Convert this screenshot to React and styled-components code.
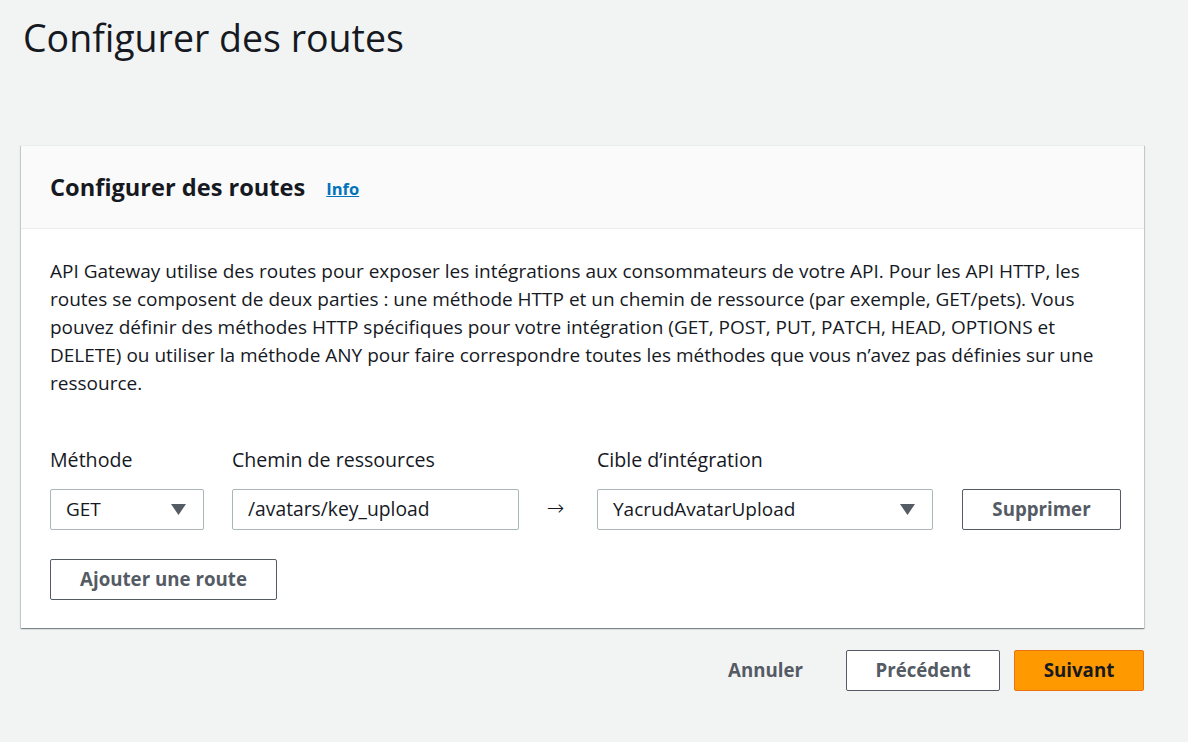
import React from 'react'
import styled, { createGlobalStyle } from 'styled-components'

const Global = createGlobalStyle`
  html, body {
    margin: 0;
    padding: 0;
    background: #f2f3f3;
    font-family: 'Open Sans', 'Noto Sans', sans-serif;
    color: #16191f;
  }
`

const description = [
  'API Gateway utilise des routes pour exposer les intégrations aux consommateurs de votre API. Pour les API HTTP, les',
  'routes se composent de deux parties : une méthode HTTP et un chemin de ressource (par exemple, GET/pets). Vous',
  'pouvez définir des méthodes HTTP spécifiques pour votre intégration (GET, POST, PUT, PATCH, HEAD, OPTIONS et',
  'DELETE) ou utiliser la méthode ANY pour faire correspondre toutes les méthodes que vous n’avez pas définies sur une',
  'ressource.',
].join('\n')

function Caret() {
  return (
    <svg width="15" height="11" viewBox="0 0 15 11">
      <polygon points="0,0 15,0 7.5,11" fill="#545b64" />
    </svg>
  )
}

function App() {
  return (
    <Page>
      <Global />
      <Title>Configurer des routes</Title>

      <Card>
        <CardHeader>
          <CardTitle>Configurer des routes</CardTitle>
          <InfoLink href="#">Info</InfoLink>
        </CardHeader>

        <CardBody>
          <Description>{description}</Description>

          <RouteRow>
            <Field w={154} mr={28}>
              <Label>Méthode</Label>
              <Select>
                <span>GET</span>
                <Caret />
              </Select>
            </Field>
            <Field w={287}>
              <Label>Chemin de ressources</Label>
              <Input>/avatars/key_upload</Input>
            </Field>
            <Arrow>→</Arrow>
            <Field w={336} mr={29}>
              <Label>Cible d’intégration</Label>
              <Select>
                <span>YacrudAvatarUpload</span>
                <Caret />
              </Select>
            </Field>
            <Button w={159}>Supprimer</Button>
          </RouteRow>

          <Button w={227}>Ajouter une route</Button>
        </CardBody>
      </Card>

      <Footer>
        <LinkButton>Annuler</LinkButton>
        <Button w={154}>Précédent</Button>
        <Button w={130} primary>Suivant</Button>
      </Footer>
    </Page>
  )
}

export default App

const Page = styled.div`
  width: 1123px;
  padding: 0 0 0 21px;
`

const Title = styled.h1`
  margin: 0;
  padding: 12px 0 0 2px;
  font-size: 37.5px;
  font-weight: 400;
  line-height: 52px;
  color: #16191f;
`

const Card = styled.section`
  margin-top: 81px;
  background: #fff;
  border-top: 1px solid #eaeded;
  box-shadow: 0 1px 1px 0 rgba(0, 28, 36, 0.3), 1px 1px 1px 0 rgba(0, 28, 36, 0.15),
    -1px 1px 1px 0 rgba(0, 28, 36, 0.15);
`

const CardHeader = styled.div`
  height: 82px;
  display: flex;
  align-items: center;
  padding: 0 29px;
  background: #fafafa;
  border-bottom: 1px solid #eaeded;
`

const CardTitle = styled.h2`
  margin: 0;
  font-size: 23.6px;
  font-weight: 700;
  color: #16191f;
`

const InfoLink = styled.a`
  margin-left: 21px;
  margin-top: 3px;
  font-size: 16.5px;
  font-weight: 700;
  color: #0073bb;
  text-decoration: underline;
`

const CardBody = styled.div`
  padding: 28px 23px 28px 29px;
`

const Description = styled.p`
  margin: 0;
  font-size: 19px;
  line-height: 28px;
  white-space: pre;
`

const RouteRow = styled.div`
  display: flex;
  align-items: flex-end;
  margin-top: 50px;
  margin-bottom: 29px;
`

const Field = styled.div`
  flex: 0 0 ${p => p.w}px;
  margin-right: ${p => p.mr || 0}px;
  display: flex;
  flex-direction: column;
`

const Label = styled.label`
  font-size: 19.6px;
  line-height: 26px;
  margin-bottom: 16px;
  color: #16191f;
  white-space: nowrap;
`

const Select = styled.div`
  height: 41px;
  box-sizing: border-box;
  border: 1px solid #aab7b8;
  border-radius: 2px;
  background: #fff;
  display: flex;
  align-items: center;
  justify-content: space-between;
  padding: 0 17px 2px 15px;
  font-size: 19px;
  color: #16191f;

  svg {
    margin-top: 2px;
  }
`

const Input = styled.div`
  height: 41px;
  box-sizing: border-box;
  border: 1px solid #aab7b8;
  border-radius: 2px;
  background: #fff;
  display: flex;
  align-items: center;
  padding: 0 15px 2px;
  font-size: 19.3px;
  color: #16191f;
`

const Arrow = styled.div`
  flex: 0 0 78px;
  height: 41px;
  display: flex;
  align-items: center;
  justify-content: center;
  padding: 0 5px 3px 0;
  box-sizing: border-box;
  font-family: 'DejaVu Sans', sans-serif;
  font-size: 21px;
  font-weight: 300;
  color: #16191f;
`

const Button = styled.button`
  flex: 0 0 ${p => p.w}px;
  width: ${p => p.w}px;
  height: 41px;
  box-sizing: border-box;
  border: 1px solid ${p => (p.primary ? '#ec7211' : '#545b64')};
  border-radius: 2px;
  background: ${p => (p.primary ? '#ff9900' : '#fff')};
  color: ${p => (p.primary ? '#16191f' : '#545b64')};
  font-family: 'Open Sans', 'Noto Sans', sans-serif;
  font-size: 18.7px;
  font-weight: 700;
  cursor: pointer;
  padding: 0 0 3px;
`

const Footer = styled.div`
  display: flex;
  align-items: center;
  justify-content: flex-end;
  gap: 14px;
  margin-top: 22px;
`

const LinkButton = styled.button`
  background: none;
  border: none;
  margin-right: 29px;
  font-family: 'Open Sans', 'Noto Sans', sans-serif;
  font-size: 18.7px;
  font-weight: 700;
  color: #545b64;
  padding: 0 0 3px;
  cursor: pointer;
`
